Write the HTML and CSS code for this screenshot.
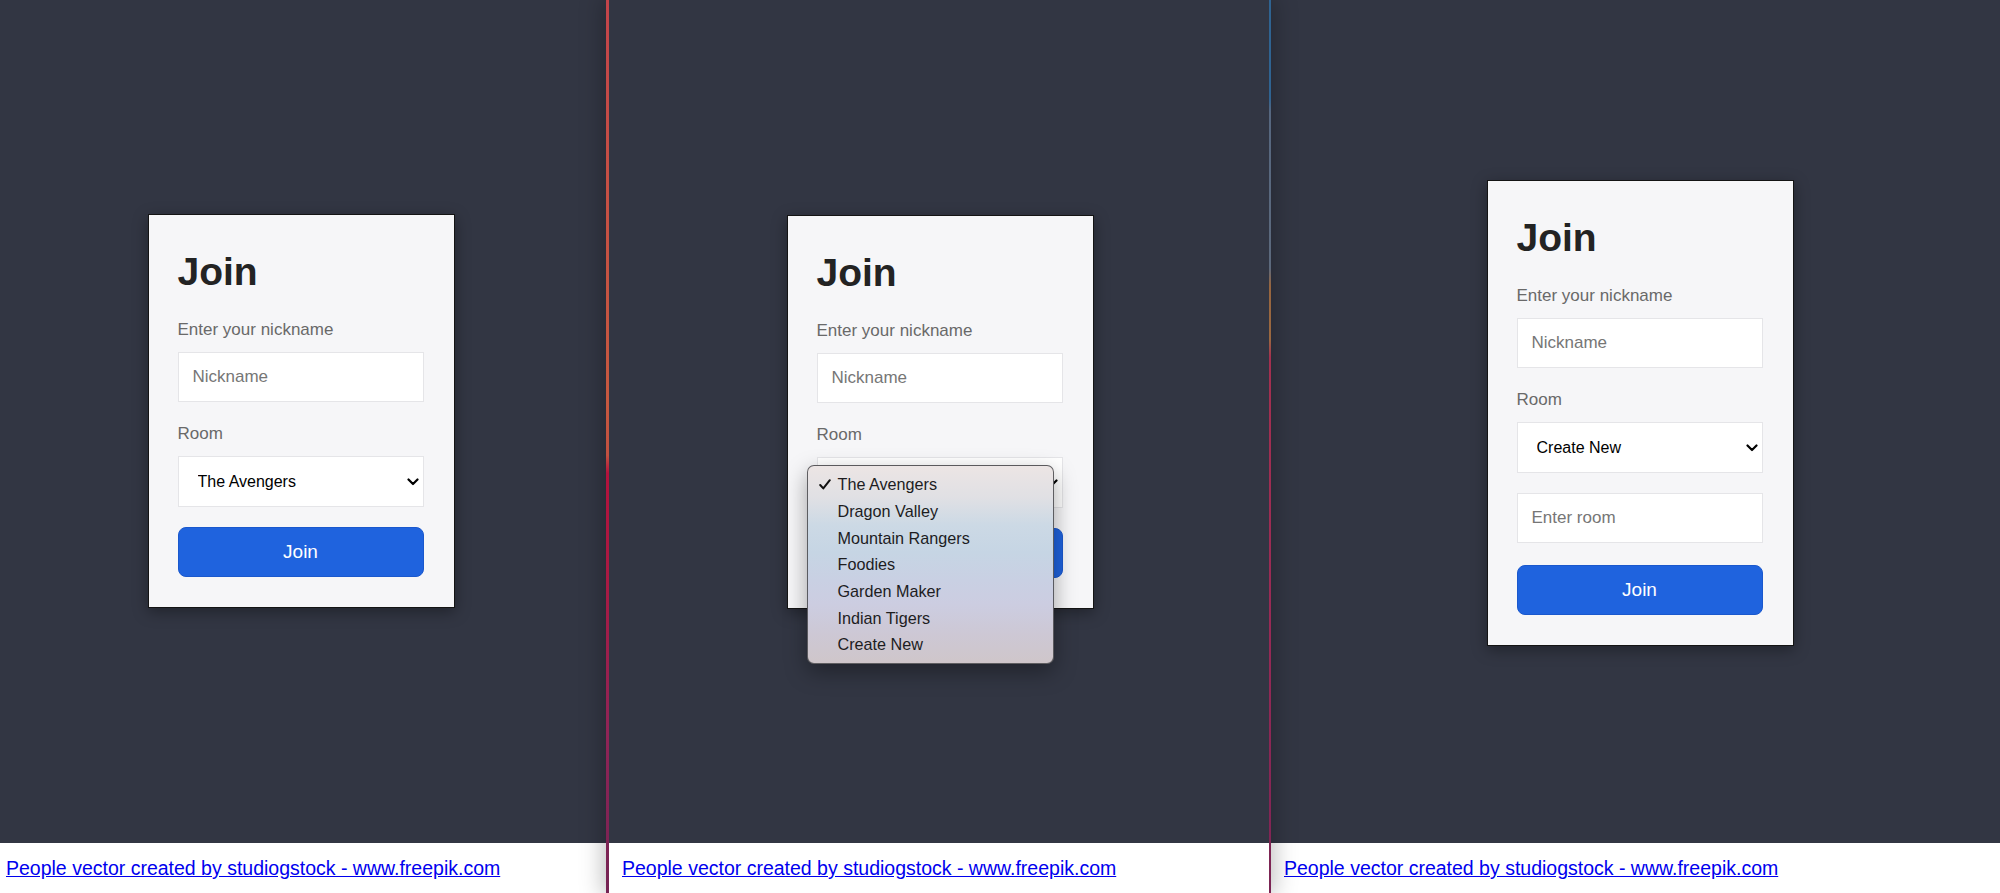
FILE: index.html
```html
<!DOCTYPE html>
<html lang="en">
<head>
<meta charset="utf-8">
<title>Join</title>
<link rel="stylesheet" href="styles.css">
</head>
<body>
<div class="screen">
  <section class="pane pane-left">
    <main class="stage stage-left">
      <form class="card">
        <h1 class="card-title">Join</h1>
        <label class="field-label" for="nick1">Enter your nickname</label>
        <input class="field" id="nick1" type="text" placeholder="Nickname">
        <label class="field-label" for="room1">Room</label>
        <div class="select-wrap">
          <select class="field field-select" id="room1">
            <option>The Avengers</option>
            <option>Dragon Valley</option>
            <option>Mountain Rangers</option>
            <option>Foodies</option>
            <option>Garden Maker</option>
            <option>Indian Tigers</option>
            <option>Create New</option>
          </select>
          <svg class="chevron" width="12" height="8" viewBox="0 0 12 8"><path d="M1.5 1.5 L6 6 L10.5 1.5" fill="none" stroke="#000" stroke-width="2.2" stroke-linecap="round" stroke-linejoin="round"/></svg>
        </div>
        <button class="btn" type="button">Join</button>
      </form>
    </main>
    <footer class="credit credit-left"><a href="#">People vector created by studiogstock - www.freepik.com</a></footer>
  </section>

  <div class="window">
    <div class="edge edge-l"></div>
    <section class="pane pane-mid">
      <main class="stage stage-mid">
        <form class="card">
          <h1 class="card-title">Join</h1>
          <label class="field-label" for="nick2">Enter your nickname</label>
          <input class="field" id="nick2" type="text" placeholder="Nickname">
          <label class="field-label" for="room2">Room</label>
          <div class="select-wrap">
            <select class="field field-select" id="room2">
              <option>The Avengers</option>
            </select>
            <svg class="chevron" width="12" height="8" viewBox="0 0 12 8"><path d="M1.5 1.5 L6 6 L10.5 1.5" fill="none" stroke="#000" stroke-width="2.2" stroke-linecap="round" stroke-linejoin="round"/></svg>
            <ul class="popup">
              <li class="popup-item"><span class="tick-slot"><svg class="tick" width="12" height="11" viewBox="0 0 12 11"><path d="M1.2 6 L4.3 9.4 L10.8 1.2" fill="none" stroke="#111" stroke-width="2" stroke-linecap="round" stroke-linejoin="round"/></svg></span>The Avengers</li>
              <li class="popup-item"><span class="tick-slot"></span>Dragon Valley</li>
              <li class="popup-item"><span class="tick-slot"></span>Mountain Rangers</li>
              <li class="popup-item"><span class="tick-slot"></span>Foodies</li>
              <li class="popup-item"><span class="tick-slot"></span>Garden Maker</li>
              <li class="popup-item"><span class="tick-slot"></span>Indian Tigers</li>
              <li class="popup-item"><span class="tick-slot"></span>Create New</li>
            </ul>
          </div>
          <button class="btn" type="button">Join</button>
        </form>
      </main>
      <footer class="credit"><a href="#">People vector created by studiogstock - www.freepik.com</a></footer>
    </section>
    <div class="edge edge-r"></div>
  </div>

  <section class="pane pane-right">
    <main class="stage stage-right">
      <form class="card">
        <h1 class="card-title">Join</h1>
        <label class="field-label" for="nick3">Enter your nickname</label>
        <input class="field" id="nick3" type="text" placeholder="Nickname">
        <label class="field-label" for="room3">Room</label>
        <div class="select-wrap">
          <select class="field field-select" id="room3">
            <option>Create New</option>
          </select>
          <svg class="chevron" width="12" height="8" viewBox="0 0 12 8"><path d="M1.5 1.5 L6 6 L10.5 1.5" fill="none" stroke="#000" stroke-width="2.2" stroke-linecap="round" stroke-linejoin="round"/></svg>
        </div>
        <input class="field" type="text" placeholder="Enter room">
        <button class="btn" type="button">Join</button>
      </form>
    </main>
    <footer class="credit"><a href="#">People vector created by studiogstock - www.freepik.com</a></footer>
  </section>
</div>
</body>
</html>
```

FILE: styles.css
```css
* { box-sizing: border-box; }

html, body {
  margin: 0;
  padding: 0;
}

body {
  width: 2000px;
  height: 893px;
  overflow: hidden;
  background: #ffffff;
  font-family: "Liberation Sans", Arial, sans-serif;
}

.screen {
  display: flex;
  height: 893px;
}

.pane {
  display: flex;
  flex-direction: column;
  height: 893px;
}

.pane-left {
  width: 606px;
  flex: none;
}

.window {
  display: flex;
  flex: none;
  width: 665px;
  position: relative;
  z-index: 2;
  box-shadow: 0 0 22px 3px rgba(0, 0, 0, 0.26);
}

.pane-mid {
  flex: 1;
  min-width: 0;
}

.pane-right {
  flex: 1;
  min-width: 0;
}

.edge {
  flex: none;
  width: 3px;
  height: 893px;
}

.edge-l {
  background: linear-gradient(to bottom,
    #c3444a 0%, #c54f44 20%, #c6583f 45%, #c15040 51%,
    #b3123c 53%, #a91a43 65%, #8f2456 82%, #752353 100%);
}

.edge-r {
  width: 2px;
  background: linear-gradient(to bottom,
    #2f6391 0%, #2f6391 11%, #56677f 12.5%, #5c697c 30%,
    #96653f 32%, #9a6840 38%, #a3304f 40%, #972a55 70%, #7a2454 100%);
}

.stage {
  flex: none;
  height: 843px;
  background: #323643;
  display: flex;
  align-items: center;
  justify-content: center;
  padding-bottom: 21px;
}

.stage-left {
  padding-right: 4px;
}

.stage-mid {
  padding-top: 1px;
  padding-left: 2px;
}

.stage-right {
  padding-top: 4px;
  padding-left: 9px;
}

.card {
  width: 307px;
  margin: 0;
  background: #f6f6f8;
  border: 1px solid #141414;
  padding: 34px 30px 30px 29px;
  display: flex;
  flex-direction: column;
  box-shadow: 0 4px 14px rgba(0, 0, 0, 0.35);
}

.card-title {
  margin: 0 0 25px;
  font-size: 39px;
  line-height: 46px;
  font-weight: 700;
  color: #232323;
}

.field-label {
  display: block;
  font-size: 17px;
  line-height: 20px;
  color: #696969;
  margin-bottom: 12px;
}

.field {
  display: block;
  width: 100%;
  height: 50px;
  margin: 0 0 22px;
  padding: 0 14px;
  border: 1px solid #e5e5e8;
  border-radius: 0;
  background: #ffffff;
  font-family: "Liberation Sans", Arial, sans-serif;
  font-size: 17px;
  color: #222;
  outline: none;
}

.field::placeholder {
  color: #767676;
}

.select-wrap {
  position: relative;
  margin-bottom: 20px;
}

.field-select {
  height: 51px;
  margin: 0;
  padding-left: 19px;
  font-size: 16px;
  color: #000;
  -webkit-appearance: none;
  appearance: none;
}

.chevron {
  position: absolute;
  right: 5px;
  top: 22px;
  pointer-events: none;
}

.btn {
  display: block;
  width: 100%;
  height: 50px;
  margin: 0;
  border: 1px solid #1a58cd;
  border-radius: 8px;
  background: #1f63de;
  color: #ffffff;
  font-family: "Liberation Sans", Arial, sans-serif;
  font-size: 19px;
  cursor: pointer;
}

.popup {
  position: absolute;
  left: -10px;
  top: 8px;
  width: 247px;
  margin: 0;
  padding: 6px 0 5px;
  list-style: none;
  border: 1px solid rgba(70, 70, 74, 0.85);
  border-radius: 7px;
  background: linear-gradient(to bottom,
    #ece5e4 0%, #e0e0e4 16%, #ccd9e5 30%, #c6d5e4 44%,
    #c9d0e3 58%, #cccde1 70%, #cdc8d5 85%, #cfc6ca 100%);
  box-shadow: 0 8px 22px rgba(0, 0, 0, 0.35);
}

.popup-item {
  display: flex;
  align-items: center;
  height: 26.7px;
  font-size: 16.2px;
  color: #1d1d1f;
  white-space: nowrap;
}

.tick-slot {
  flex: none;
  width: 30px;
  padding-left: 11px;
  display: flex;
  align-items: center;
}

.credit {
  flex: 1;
  background: #ffffff;
  padding: 14px 0 0 13px;
}

.credit-left {
  padding-left: 6px;
}

.credit a {
  font-size: 19.5px;
  line-height: 22px;
  color: #0000ee;
  text-decoration: underline;
}
```
